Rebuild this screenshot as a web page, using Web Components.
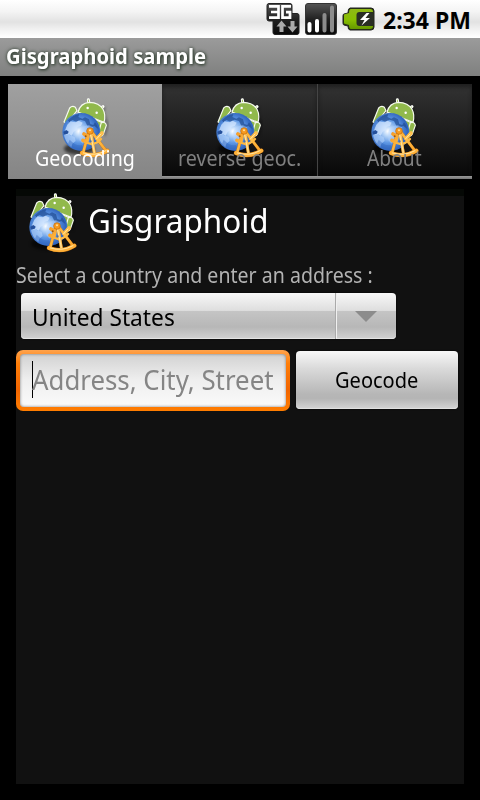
<!DOCTYPE html>
<html lang="en"><head><meta charset="utf-8"><title>Gisgraphoid sample</title>
<style>html,body{margin:0;background:#000}body{width:480px;height:800px;overflow:hidden;font-family:"Noto Sans","Open Sans",sans-serif}</style>
</head><body>
<gis-app></gis-app>
<script>
const define=(name,html,setup)=>customElements.define(name,class extends HTMLElement{
  connectedCallback(){
    if(this.shadowRoot)return;
    const t=document.createElement('template');t.innerHTML=html;
    this.attachShadow({mode:'open'}).append(t.content.cloneNode(true));
    if(setup)setup(this,this.shadowRoot);
  }});

/* Single text line condensed to a given advance width. */
define('fit-text',`<style>:host{display:block;flex:none;white-space:nowrap;line-height:30px;height:30px}
span{display:inline-block;transform-origin:0 50%;white-space:pre}</style><span><slot></slot></span>`,(h,r)=>{
  const w=+h.getAttribute('width'),s=r.querySelector('span');
  h.style.width=w+'px';h.style.fontSize=h.getAttribute('size')+'px';
  s.style.transform='scaleX('+(w/s.offsetWidth)+')';
});

define('app-logo',`<style>:host{display:block;flex:none;width:52px;height:64px}svg{display:block}</style>
<svg width="52" height="64" viewBox="180 48 156 192">
<defs><radialGradient id="g" cx=".44" cy=".48" r=".62"><stop offset="0" stop-color="#fff"/><stop offset=".2" stop-color="#b9d6f8"/><stop offset=".5" stop-color="#5c96e4"/><stop offset=".85" stop-color="#2e62bb"/><stop offset="1" stop-color="#7fb0f2"/></radialGradient>
<linearGradient id="o" gradientUnits="userSpaceOnUse" x1="245" y1="150" x2="325" y2="220"><stop offset="0" stop-color="#f5951f"/><stop offset=".5" stop-color="#ffc04a"/><stop offset="1" stop-color="#fb9d22"/></linearGradient>
<filter id="b" x="-20%" y="-50%" width="140%" height="200%"><feGaussianBlur stdDeviation="4"/></filter></defs>
<ellipse cx="238" cy="206" rx="46" ry="18" fill="#000" opacity=".6" filter="url(#b)"/>
<path d="M314 82l-6 12 6 18 8 20-8 34" fill="none" stroke="#000" stroke-width="5" opacity=".5" filter="url(#b)"/>
<path d="M265 59l2 14M309 80l-11 9" stroke="#fff" stroke-width="9" stroke-linecap="round"/>
<path d="M265 60l2 14M308 81l-11 9" stroke="#a2c65a" stroke-width="3" stroke-linecap="round"/>
<g fill="#91b94c" stroke="#f6faef" stroke-width="3.500" stroke-linejoin="round">
<path d="M209 84q8-8 17-2l5 10-30 38-9-4z"/>
<path d="M228 104l9-7 70 31-7 43-36 12z"/>
<path d="M234 96Q241 69 268 67q30 1 41 21 9 17 3 39z"/>
<path d="M304 128q13-4 15 8l-9 26q-5 11-17 6z"/></g>
<circle cx="263" cy="84" r="3.700" fill="#fff"/><circle cx="290" cy="98" r="3.700" fill="#fff"/>
<circle cx="244" cy="156" r="57" fill="url(#g)"/>
<path d="M204 121q15-16 34-19l-3 9 12 5 8-4 12 6 4 14 9 3 5-8q8 8 10 20l-12-9-9 4-12-5-7-14-14-4-12 6-12-5-9 7z" fill="#214b92" opacity=".7"/>
<path d="M202 134l10-10 14 3 10-5 12 6-5 9-10 4-2 10-10 4-6 12-8-4-9 2-5-9z" fill="#d5e7ff" opacity=".72"/>
<path d="M191 158l10-1 9 9 14 5 3 12-10 8-3 10q-20-15-23-43z" fill="#b3d2fa" opacity=".65"/>
<path d="M238 153l10-13 18-5 14 7-6 13-16 17-10 19-10-10z" fill="#b9d8ff" opacity=".4"/>
<path d="M190 155l9-5 7 5-3 6-12 3z" fill="#244f9b"/>
<path d="M209 179q19 20 35 16 11 7-3 13-20 2-37-17z" fill="#2d64bd" opacity=".4"/>
<g fill="none" stroke-linecap="round" stroke-linejoin="round">
<g stroke="#c9730f"><path d="M267 153l-17 63M273 153l44 58M272 153l12 71" stroke-width="9"/><path d="M246 219q38 16 76-7" stroke-width="13"/></g>
<g stroke="url(#o)"><path d="M267 153l-17 63M273 153l44 58" stroke-width="7.500"/><path d="M272 153l12 71" stroke="#ffc65d" stroke-width="8"/><path d="M246 219q38 16 76-7" stroke="#ffb23a" stroke-width="11"/>
<path d="M255 184q24 19 48-7" stroke-width="7"/><path d="M252 162l12 7-4 17-11-5M291 176l15-17" stroke-width="11"/></g>
<path d="M250 219q36 11 68-7M270 156l13 61M289 177l14-15" stroke="#ffe6a5" stroke-width="3"/></g>
<circle cx="270" cy="153" r="10" fill="#f79a20" stroke="#bd6507" stroke-width="2"/><circle cx="270" cy="151" r="3" fill="#ffe0a0"/>
<circle cx="257" cy="169" r="3" fill="#9b570f"/><circle cx="272" cy="184" r="3" fill="#4e70a5"/>
</svg>`);

define('status-bar',`<style>:host{display:flex;box-sizing:border-box;height:38px;justify-content:flex-end;padding:3px 9px 0 0;background:linear-gradient(#fff 0,#f4f4f4 30%,#e2e2e2 58%,#f0f0f0 76%,#fff 98%);font-weight:700}
svg{display:block;flex:none}fit-text{margin:2px 0 0 7px;color:#000}</style>
<svg width="110" height="33" viewBox="265 3 110 33"><defs>
<linearGradient id="k" x1="0" y1="0" x2="0" y2="1"><stop offset="0" stop-color="#555"/><stop offset=".5" stop-color="#222"/><stop offset="1" stop-color="#090909"/></linearGradient>
<linearGradient id="l" x1="0" y1="0" x2="0" y2="1"><stop offset="0" stop-color="#8fb817"/><stop offset=".55" stop-color="#87bd00"/><stop offset="1" stop-color="#659800"/></linearGradient></defs>
<path d="M268 3.500h21q2 0 2 2v8h5q2 0 2 2v17q0 2-2 2h-22q-2 0-2-2V21h-4q-2 0-2-2V5.500q0-2 2-2z" fill="url(#k)" stroke="#222"/>
<g fill="none" stroke="#fff" stroke-width="2.700"><path d="M268 6.300h9.500v11.400h-9.500M270 12h8M290 6.300h-8.500v11.400h7.500v-5.500h-4"/></g>
<path d="M280.500 20.500l5 6h-3v5.500h-4v-5.500h-3zM291.500 32.500l-5-6h3V21h4v5.500h3z" fill="#aaa"/>
<rect x="304.500" y="3.500" width="31" height="31" rx="2.500" fill="url(#k)" stroke="#333"/>
<g stroke-width="4" stroke-linecap="round"><path d="M308.500 24v6.500M316 21v9.500" stroke="#fff"/><path d="M323.500 15v15.500M331 7.500v23" stroke="#8c8c8c"/></g>
<path d="M349 8h21q3 0 3 3v16q0 3-3 3h-21q-2 0-2-4l-4-1q-1 0-1-2v-7q0-2 1-2l4-1q0-5 2-5z" fill="#26350a" stroke="#222" stroke-width="1"/>
<path d="M350 9h19q3 0 3 3h-10q-5 0-5 4v6q0 4 5 4h10q0 3-3 3h-19q-2 0-2-4l-5-1.500v-9l5-1.500q0-4 2-4z" fill="url(#l)"/>
<rect x="355.500" y="12" width="17" height="14" rx="3" fill="#292d24"/>
<path d="M365.500 13l-6.500 7h4.500l-3 5.500 8.500-7.500h-4.500l4-5z" fill="#fff"/></svg>
<fit-text width="88" size="23">2:34 PM</fit-text>`);

define('title-bar',`<style>:host{display:flex;box-sizing:border-box;height:38px;padding:3px 5.5px;background:linear-gradient(#9b9b9b,#7f807f);color:#fff;font-weight:700;text-shadow:0 0 4px #334033,1px 1px 3px #334033}</style><fit-text width="200.5" size="21"><slot></slot></fit-text>`);

define('tab-item',`<style>:host{display:grid;box-sizing:border-box;height:92px;padding-top:12px;justify-items:center;align-content:start;color:#808080;background:linear-gradient(#333,#080808);box-shadow:inset 0 3px 4px #1119}
:host([selected]){height:95px;color:#fff;background:linear-gradient(#a0a0a0,#858585);box-shadow:none}
:host([line]){border-left:1px solid #454545}
app-logo,fit-text{grid-area:1/1}fit-text{margin-top:47px;z-index:1}app-logo{margin-left:1px}:host([line]) app-logo{margin-left:-1px}:host([line]) fit-text{margin-left:-2px}</style>
<app-logo></app-logo><fit-text></fit-text>`,(h,r)=>{
  const t=document.createElement('fit-text');t.setAttribute('size',21);t.setAttribute('width',h.getAttribute('text-width'));t.textContent=h.getAttribute('label');
  r.querySelector('fit-text').replaceWith(t);
});

define('tab-bar',`<style>:host{display:grid;grid-template-columns:154px 155px 155px;align-items:start;height:95px;margin:8px 8px 0;background:linear-gradient(#999,#777) 0 92px/100% 3px no-repeat}</style><slot></slot>`);

define('drop-down',`<style>:host{display:flex;box-sizing:border-box;width:375px;height:46px;margin-left:5px;border-radius:4px;background:linear-gradient(#f8f8f8 0,#dedede 38%,#c5c5c5 39%,#b7b7b7 74%,#d1d1d1 100%);color:#000;box-shadow:0 0 2px #000,inset 0 -1px #e3e3e3}
fit-text{margin:9px 0 0 11px}div{display:grid;place-items:center;width:60px;margin-left:auto;border-left:1px solid #aaa;box-shadow:inset 1px 0 #f0f0f0}svg{display:block}</style>
<fit-text width="143" size="24"><slot></slot></fit-text><div><svg width="22" height="11"><path d="M0 0h22L11 11z" fill="#8c8c8c"/></svg></div>`);

define('text-field',`<style>:host{display:flex;box-sizing:border-box;width:274px;height:61px;padding:4px;border-radius:7px;background:linear-gradient(#ffa34d,#ff7e08 22%,#f26500 65%,#ff7d00)}
div{display:flex;flex:1;border-radius:4px;background:linear-gradient(#d2d2d2,#efefef 50%,#fafafa);box-shadow:inset 0 0 3px #777;color:#858585}
i{width:1px;height:37px;background:#000;margin:7px 0 0 12px}fit-text{margin:11px 0 0 -1px}</style>
<div><i></i><fit-text width="242" size="27"><slot></slot></fit-text></div>`);

define('push-button',`<style>:host{display:flex;box-sizing:border-box;width:162px;height:58px;margin-top:1px;justify-content:center;border-radius:4px;background:linear-gradient(#f8f8f8,#dadada 30%,#b6b6b6 75%,#b5b5b5 82%,#d4d4d4);color:#000;box-shadow:0 0 2px #000,inset 0 -1px #e0e0e0}fit-text{margin:14px 2px 0 0}</style><fit-text width="83" size="21"><slot></slot></fit-text>`);

define('content-panel',`<style>:host{display:block;box-sizing:border-box;width:448px;height:595px;margin:10px 16px 0;background:linear-gradient(#050805 7px,#111 7px)}
header{display:flex;height:69px;padding:2px 0 0 11px;color:#fff}header fit-text{margin:15px 0 0 9px}
.hint{color:#b3b3b3;margin-bottom:3px}.row{display:flex;align-items:flex-start;gap:6px;margin-top:11px}</style>
<header><app-logo></app-logo><fit-text width="181" size="33">Gisgraphoid</fit-text></header>
<fit-text class="hint" width="357" size="21">Select a country and enter an address :</fit-text>
<drop-down>United States</drop-down>
<div class="row"><text-field>Address, City, Street</text-field><push-button>Geocode</push-button></div>`);

define('gis-app',`<style>:host{display:flex;flex-direction:column;width:480px;height:800px;background:#000}</style>
<status-bar></status-bar><title-bar>Gisgraphoid sample</title-bar>
<tab-bar><tab-item selected label="Geocoding" text-width="100"></tab-item><tab-item label="reverse geoc." text-width="123"></tab-item><tab-item line label="About" text-width="55"></tab-item></tab-bar>
<content-panel></content-panel>`);
</script></body></html>
